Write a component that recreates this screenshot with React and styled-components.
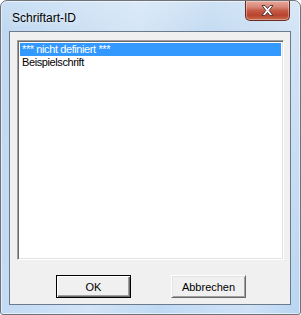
import React from "react";
import styled, { createGlobalStyle } from "styled-components";

const Global = createGlobalStyle`
  html, body { margin: 0; padding: 0; background: #ffffff; }
  #root { width: 301px; height: 315px; }
`;

const Window = styled.div`
  box-sizing: border-box;
  width: 301px;
  height: 315px;
  border: 1px solid #6f7378;
  border-radius: 7px 7px 3px 3px;
  background:
    linear-gradient(100deg, rgba(255,255,255,0) 0%, rgba(255,255,255,0.35) 40%, rgba(255,255,255,0.1) 60%, rgba(255,255,255,0.3) 85%, rgba(255,255,255,0) 100%),
    linear-gradient(180deg, #c9dff4 0px, #bfd8f1 30px, #b9d5f2 100%);
  box-shadow: inset 0 0 0 1px rgba(255,255,255,0.55);
  display: flex;
  flex-direction: column;
  padding: 0 9px 9px 8px;
  font-family: "Liberation Sans", Arial, sans-serif;
`;

const TitleBar = styled.div`
  height: 30px;
  display: flex;
  align-items: flex-start;
  flex: none;
`;

const Title = styled.div`
  font-size: 12px;
  color: #000;
  margin: 10px 0 0 3px;
  line-height: 14px;
  text-shadow: 0 0 6px rgba(255,255,255,0.9);
`;

const CloseButton = styled.div`
  margin-left: auto;
  margin-right: 1px;
  width: 45px;
  height: 20px;
  box-sizing: border-box;
  border: 1px solid #6c2a22;
  border-top: none;
  border-radius: 0 0 5px 5px;
  background: linear-gradient(180deg, #e8a899 0%, #d9897a 30%, #c65c48 50%, #b8442f 75%, #c96a4c 100%);
  box-shadow: inset 0 0 0 1px rgba(255,255,255,0.35);
  display: flex;
  align-items: center;
  justify-content: center;
`;

const Client = styled.div`
  flex: 1;
  border: 1px solid #6b7b8c;
  background: #f0f0f0;
  display: flex;
  flex-direction: column;
  padding: 8px 6px 6px 7px;
`;

const ListBox = styled.div`
  box-sizing: border-box;
  height: 220px;
  background: #fff;
  border-style: solid;
  border-width: 1px;
  border-color: #a0a0a0 #ffffff #ffffff #a0a0a0;
  box-shadow: inset 1px 1px 0 #696969, inset -1px -1px 0 #e3e3e3;
  padding: 2px;
  display: flex;
  flex-direction: column;
`;

const Item = styled.div`
  height: 13px;
  line-height: 13px;
  font-size: 11px;
  letter-spacing: -0.4px;
  padding-left: 2px;
  white-space: nowrap;
  color: ${(p) => (p.$selected ? "#ffffff" : "#000000")};
  background: ${(p) => (p.$selected ? "#3399ff" : "transparent")};
`;

const ButtonRow = styled.div`
  margin-top: auto;
  display: flex;
  justify-content: center;
  gap: 40px;
  padding-left: 1px;
`;

const Button = styled.div`
  box-sizing: border-box;
  width: 75px;
  height: 23px;
  display: flex;
  align-items: center;
  justify-content: center;
  font-size: 11px;
  color: #000;
  background: #f0f0f0;
  border: 1px solid ${(p) => (p.$default ? "#000" : "#f0f0f0")};
  border-color: ${(p) => (p.$default ? "#000" : "#ffffff #696969 #696969 #ffffff")};
  box-shadow: ${(p) =>
    p.$default
      ? "inset 1px 1px 0 #ffffff, inset -1px -1px 0 #696969, inset -2px -2px 0 #a0a0a0"
      : "inset 1px 1px 0 #e3e3e3, inset -1px -1px 0 #a0a0a0"};
`;

const CloseGlyph = () => (
  <svg width="15" height="13" viewBox="0 0 15 13">
    <path
      d="M2 1.5 L5 1.5 L7.5 4.5 L10 1.5 L13 1.5 L9.2 6.5 L13 11.5 L10 11.5 L7.5 8.5 L5 11.5 L2 11.5 L5.8 6.5 Z"
      fill="#ffffff"
      stroke="#5a3a38"
      strokeWidth="1"
      strokeLinejoin="round"
    />
  </svg>
);

export default function App() {
  return (
    <>
      <Global />
      <Window>
        <TitleBar>
          <Title>Schriftart-ID</Title>
          <CloseButton>
            <CloseGlyph />
          </CloseButton>
        </TitleBar>
        <Client>
          <ListBox>
            <Item $selected>*** nicht definiert ***</Item>
            <Item>Beispielschrift</Item>
          </ListBox>
          <ButtonRow>
            <Button $default>OK</Button>
            <Button>Abbrechen</Button>
          </ButtonRow>
        </Client>
      </Window>
    </>
  );
}
